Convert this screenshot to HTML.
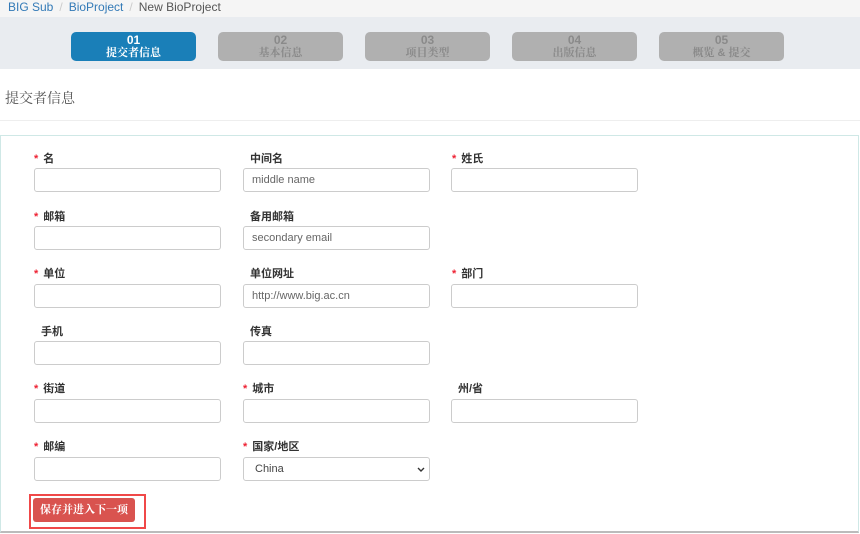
<!DOCTYPE html>
<html><head><meta charset="utf-8"><style>
*{box-sizing:border-box;margin:0;padding:0}
body{width:860px;height:534px;overflow:hidden;background:#fff;font-family:"Liberation Sans","Noto Sans CJK SC",sans-serif;position:relative}
.bc{position:absolute;left:0;top:0;width:860px;height:17px;background:#f5f5f5;font-size:12px;line-height:14px;padding-left:8px;color:#555}
.bc a{color:#337ab7}.bc s{text-decoration:none;color:#ccc;margin:0 6px}
.band{position:absolute;left:0;top:17px;width:860px;height:52px;background:#e9ecf0}
.st{position:absolute;top:15px;width:125px;height:29px;border-radius:5px;background:#b0b0b0;color:#8a8a8a;text-align:center;font-size:11px;line-height:12px;padding-top:3px;font-weight:bold;font-family:"Liberation Sans","Noto Serif CJK SC",serif}
.st b{display:block;font-family:"Liberation Sans",sans-serif;font-size:12px;line-height:11px;margin-bottom:1px}
.st.on{background:#1a7fb8;color:#fff}
h3{position:absolute;left:5px;top:88px;font-size:14px;font-weight:normal;color:#555;font-family:"Liberation Serif","Noto Serif CJK SC",serif}
.hr{position:absolute;left:0;top:120px;width:860px;height:1px;background:#eee}
.panel{position:absolute;left:0;top:135px;width:859px;height:398px;border:1px solid #cfe8e6;border-bottom:2px solid #bbb}
.lb{position:absolute;font-size:11px;font-weight:bold;color:#333}
.lb i{color:#e23;font-style:normal;margin-right:5px}
.in{position:absolute;width:187px;height:24px;border:1px solid #ccc;border-radius:3px;font-size:11px;color:#666;padding:6px 8px;line-height:11px}
.btnw{position:absolute;left:29px;top:494px;width:117px;height:35px;border:2px solid #f04848}
.btn{position:absolute;left:33px;top:498px;width:102px;height:24px;background:#d9534f;border-radius:3px;color:#fff;font-size:11px;font-weight:bold;text-align:center;line-height:24px;font-family:"Liberation Sans","Noto Serif CJK SC",serif;white-space:nowrap}
</style></head><body>
<div class="bc"><a>BIG Sub</a><s>/</s><a>BioProject</a><s>/</s>New BioProject</div>
<div class="band">
<div class="st on" style="left:71px"><b>01</b>提交者信息</div>
<div class="st" style="left:218px"><b>02</b>基本信息</div>
<div class="st" style="left:365px"><b>03</b>项目类型</div>
<div class="st" style="left:512px"><b>04</b>出版信息</div>
<div class="st" style="left:659px"><b>05</b>概览 &amp; 提交</div>
</div>
<h3>提交者信息</h3><div class="hr"></div>
<div class="panel"></div>

<div class="lb" style="left:34px;top:150px"><i>*</i>名</div>
<div class="lb" style="left:250px;top:150px">中间名</div>
<div class="lb" style="left:452px;top:150px"><i>*</i>姓氏</div>
<div class="in" style="left:34px;top:168px"></div>
<div class="in" style="left:243px;top:168px">middle name</div>
<div class="in" style="left:451px;top:168px"></div>

<div class="lb" style="left:34px;top:208px"><i>*</i>邮箱</div>
<div class="lb" style="left:250px;top:208px">备用邮箱</div>
<div class="in" style="left:34px;top:226px"></div>
<div class="in" style="left:243px;top:226px">secondary email</div>

<div class="lb" style="left:34px;top:265px"><i>*</i>单位</div>
<div class="lb" style="left:250px;top:265px">单位网址</div>
<div class="lb" style="left:452px;top:265px"><i>*</i>部门</div>
<div class="in" style="left:34px;top:284px"></div>
<div class="in" style="left:243px;top:284px">http://www.big.ac.cn</div>
<div class="in" style="left:451px;top:284px"></div>

<div class="lb" style="left:41px;top:323px">手机</div>
<div class="lb" style="left:250px;top:323px">传真</div>
<div class="in" style="left:34px;top:341px"></div>
<div class="in" style="left:243px;top:341px"></div>

<div class="lb" style="left:34px;top:380px"><i>*</i>街道</div>
<div class="lb" style="left:243px;top:380px"><i>*</i>城市</div>
<div class="lb" style="left:458px;top:380px">州/省</div>
<div class="in" style="left:34px;top:399px"></div>
<div class="in" style="left:243px;top:399px"></div>
<div class="in" style="left:451px;top:399px"></div>

<div class="lb" style="left:34px;top:438px"><i>*</i>邮编</div>
<div class="lb" style="left:243px;top:438px"><i>*</i>国家/地区</div>
<div class="in" style="left:34px;top:457px"></div>
<div class="in" style="left:243px;top:457px;color:#444;padding-left:11px">China<svg style="position:absolute;right:4px;top:9px" width="8" height="6" viewBox="0 0 8 6"><path d="M1 1l3 3 3-3" stroke="#333" stroke-width="1.4" fill="none"/></svg></div>

<div class="btnw"></div>
<div class="btn">保存并进入下一项</div>
</body></html>
